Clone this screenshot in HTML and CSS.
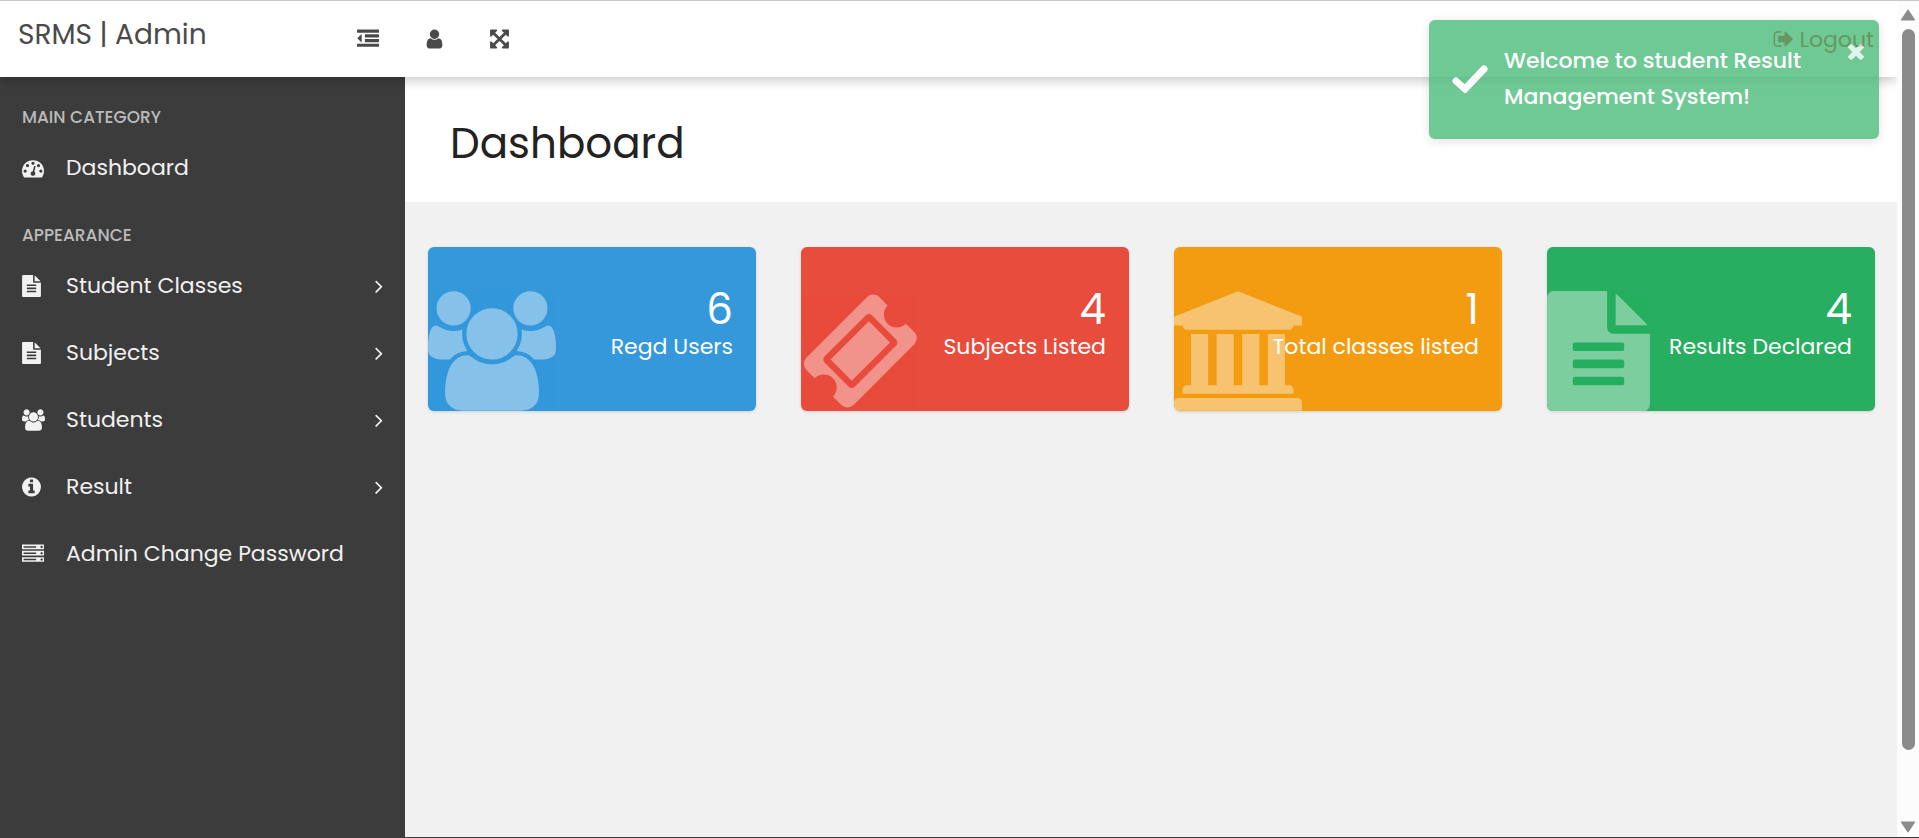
FILE: index.html
```html
<!DOCTYPE html>
<html lang="en">
<head>
<meta charset="utf-8">
<title>SRMS | Admin</title>
<link rel="stylesheet" href="styles.css">
</head>
<body>
<svg class="sprite" aria-hidden="true">
  <symbol id="users" viewBox="0 0 1920 1792"><path d="M593 896q-162 5-265 128H194q-82 0-138-40.500T0 865q0-353 124-353 6 0 43.500 21t97.500 42.500T384 597q67 0 133-23-5 37-5 66 0 139 81 256zm1071 637q0 120-73 189.500t-194 69.500H523q-121 0-194-69.500T256 1533q0-53 3.500-103.500t14-109T300 1212t43-97.500 62-81 85.500-53.500T602 960q10 0 43 21.500t73 48 107 48 135 21.500 135-21.500 107-48 73-48 43-21.500q61 0 111.500 20t85.500 53.500 62 81 43 97.500 26.500 108.500 14 109 3.500 103.500zM640 256q0 106-75 181t-181 75-181-75-75-181 75-181T384 0t181 75 75 181zm704 384q0 159-112.500 271.500T960 1024 688.500 911.500 576 640t112.500-271.500T960 256t271.500 112.500T1344 640zm576 225q0 78-56 118.500t-138 40.500h-134q-103-123-265-128 81-117 81-256 0-29-5-66 66 23 133 23 59 0 119-21.500t97.500-42.500 43.500-21q124 0 124 353zm-128-609q0 106-75 181t-181 75-181-75-75-181 75-181 181-75 181 75 75 181z"/></symbol>
  <symbol id="file" viewBox="128 0 1536 1792"><path d="M1596 476q14 14 28 36h-472v-472q22 14 36 28zm-476 164h544v1056q0 40-28 68t-68 28h-1344q-40 0-68-28t-28-68v-1600q0-40 28-68t68-28h800v544q0 40 28 68t68 28zm160 736v-64q0-14-9-23t-23-9h-704q-14 0-23 9t-9 23v64q0 14 9 23t23 9h704q14 0 23-9t9-23zm0-256v-64q0-14-9-23t-23-9h-704q-14 0-23 9t-9 23v64q0 14 9 23t23 9h704q14 0 23-9t9-23zm0-256v-64q0-14-9-23t-23-9h-704q-14 0-23 9t-9 23v64q0 14 9 23t23 9h704q14 0 23-9t9-23z"/></symbol>
  <symbol id="ticket" viewBox="12 0 1744 1792"><path d="M1024 452l316 316-572 572-316-316zm-211 979l618-618q19-19 19-45t-19-45l-362-362q-18-18-45-18t-45 18l-618 618q-19 19-19 45t19 45l362 362q18 18 45 18t45-18zm889-637l-907 908q-37 37-90.500 37t-90.500-37l-126-126q56-56 56-136t-56-136-136-56-136 56l-125-126q-37-37-37-90.500t37-90.500l907-906q37-37 90.500-37t90.500 37l125 125q-56 56-56 136t56 136 136 56 136-56l126 125q37 37 37 90.500t-37 90.500z"/></symbol>
  <symbol id="university" viewBox="0 0 1920 1792"><path d="M960 0l960 384v128h-128q0 26-20.500 45t-48.500 19h-1526q-28 0-48.500-19t-20.500-45h-128v-128zm-704 640h256v768h128v-768h256v768h128v-768h256v768h128v-768h256v768h59q28 0 48.500 19t20.500 45v64h-1664v-64q0-26 20.500-45t48.500-19h59v-768zm1595 960q28 0 48.500 19t20.500 45v128h-1920v-128q0-26 20.500-45t48.500-19h1782z"/></symbol>
  <symbol id="gauge" viewBox="0 0 1792 1792"><path d="M384 1152q0-53-37.500-90.500t-90.500-37.500-90.500 37.500-37.500 90.500 37.500 90.500 90.500 37.500 90.500-37.500 37.500-90.500zm192-448q0-53-37.500-90.500t-90.500-37.500-90.500 37.500-37.500 90.500 37.500 90.500 90.500 37.500 90.500-37.500 37.500-90.500zm428 481l101-382q6-26-7.500-48.500t-38.500-29.500-48 6.500-30 39.500l-101 382q-60 5-107 43.500t-63 98.500q-20 77 20 146t117 89 146-20 89-117q16-60-6-117t-72-91zm660-33q0-53-37.500-90.500t-90.500-37.500-90.500 37.500-37.500 90.500 37.500 90.500 90.500 37.500 90.500-37.500 37.500-90.500zm-640-640q0-53-37.500-90.500t-90.500-37.500-90.500 37.500-37.500 90.500 37.500 90.500 90.500 37.500 90.500-37.500 37.500-90.500zm448 192q0-53-37.500-90.500t-90.500-37.500-90.500 37.500-37.500 90.500 37.500 90.500 90.500 37.500 90.500-37.500 37.500-90.500zm320 448q0 261-141 483-19 29-54 29h-1402q-35 0-54-29-141-221-141-483 0-182 71-348t191-286 286-191 348-71 348 71 286 191 191 286 71 348z"/></symbol>
  <symbol id="info" viewBox="128 0 1536 1792"><path d="M1152 1376v-160q0-14-9-23t-23-9h-96v-512q0-14-9-23t-23-9h-320q-14 0-23 9t-9 23v160q0 14 9 23t23 9h96v320h-96q-14 0-23 9t-9 23v160q0 14 9 23t23 9h448q14 0 23-9t9-23zm-128-896v-160q0-14-9-23t-23-9h-192q-14 0-23 9t-9 23v160q0 14 9 23t23 9h192q14 0 23-9t9-23zm640 416q0 209-103 385.500t-279.500 279.500-385.500 103-385.500-103-279.500-279.500-103-385.500 103-385.500 279.500-279.500 385.500-103 385.500 103 279.500 279.500 103 385.500z"/></symbol>
  <symbol id="server" viewBox="0 0 1792 1792"><path d="M128 1408h1024v-128h-1024v128zm0-512h1024v-128h-1024v128zm1568 448q0-40-28-68t-68-28-68 28-28 68 28 68 68 28 68-28 28-68zm-1568-960h1024v-128h-1024v128zm1568 448q0-40-28-68t-68-28-68 28-28 68 28 68 68 28 68-28 28-68zm0-512q0-40-28-68t-68-28-68 28-28 68 28 68 68 28 68-28 28-68zm96 832v384h-1792v-384h1792zm0-512v384h-1792v-384h1792zm0-512v384h-1792v-384h1792z"/></symbol>
  <symbol id="logout" viewBox="0 0 1664 1792"><path d="M704 1440q0 4 1 20t.5 26.500-3 23.500-10 19.500-20.500 6.500h-320q-119 0-203.500-84.500t-84.500-203.500v-704q0-119 84.500-203.500t203.500-84.500h320q13 0 22.500 9.500t9.500 22.500q0 4 1 20t.5 26.500-3 23.500-10 19.500-20.500 6.500h-320q-66 0-113 47t-47 113v704q0 66 47 113t113 47h312l11.500 1 11.500 3 8 5.500 7 9 2 13.500zm928-544q0 26-19 45l-544 544q-19 19-45 19t-45-19-19-45v-288h-448q-26 0-45-19t-19-45v-384q0-26 19-45t45-19h448v-288q0-26 19-45t45-19 45 19l544 544q19 19 19 45z"/></symbol>
  <symbol id="user" viewBox="256 0 1280 1792"><path d="M1536 1399q0 109-62.500 187t-150.500 78h-854q-88 0-150.500-78t-62.500-187q0-85 8.500-160.500t31.500-152 58.500-131 94-89 134.500-34.500q131 128 313 128t313-128q76 0 134.500 34.500t94 89 58.500 131 31.500 152 8.500 160.500zm-256-887q0 159-112.500 271.500t-271.500 112.500-271.500-112.500-112.500-271.500 112.500-271.500 271.500-112.500 271.500 112.500 112.500 271.500z"/></symbol>
  <symbol id="dedent" viewBox="0 0 1792 1792"><path d="M384 544v576q0 13-9.500 22.500t-22.500 9.500q-14 0-23-9l-288-288q-9-9-9-23t9-23l288-288q9-9 23-9 13 0 22.500 9.500t9.500 22.500zm1408 768v192q0 13-9.500 22.500t-22.500 9.500h-1728q-13 0-22.500-9.500t-9.500-22.500v-192q0-13 9.500-22.500t22.500-9.500h1728q13 0 22.500 9.500t9.500 22.500zm0-384v192q0 13-9.500 22.500t-22.500 9.500h-1088q-13 0-22.500-9.500t-9.500-22.500v-192q0-13 9.500-22.500t22.500-9.500h1088q13 0 22.500 9.500t9.500 22.500zm0-384v192q0 13-9.500 22.500t-22.500 9.500h-1088q-13 0-22.500-9.500t-9.500-22.500v-192q0-13 9.500-22.500t22.500-9.500h1088q13 0 22.500 9.500t9.500 22.500zm0-384v192q0 13-9.500 22.500t-22.500 9.500h-1728q-13 0-22.500-9.500t-9.500-22.500v-192q0-13 9.500-22.500t22.500-9.500h1728q13 0 22.500 9.500t9.500 22.500z"/></symbol>
  <symbol id="expand" viewBox="128 0 1536 1792"><path d="M1411 541l-355 355 355 355 144-144q29-31 70-14 39 17 39 59v448q0 26-19 45t-45 19h-448q-42 0-59-40-17-39 14-69l144-144-355-355-355 355 144 144q31 30 14 69-17 40-59 40h-448q-26 0-45-19t-19-45v-448q0-42 40-59 39-17 69 14l144 144 355-355-355-355-144 144q-19 19-45 19-12 0-24-5-40-17-40-59v-448q0-26 19-45t45-19h448q42 0 59 40 17 39-14 69l-144 144 355 355 355-355-144-144q-31-30-14-69 17-40 59-40h448q26 0 45 19t19 45v448q0 42-39 59-13 5-25 5-26 0-45-19z"/></symbol>
  <symbol id="angle" viewBox="576 0 640 1792"><path d="M1171 960q0 13-10 23l-466 466q-10 10-23 10t-23-10l-50-50q-10-10-10-23t10-23l393-393-393-393q-10-10-10-23t10-23l50-50q10-10 23-10t23 10l466 466q10 10 10 23z"/></symbol>
  <symbol id="times" viewBox="302 366 1188 1188"><path d="M1490 1322q0 40-28 68l-136 136q-28 28-68 28t-68-28l-294-294-294 294q-28 28-68 28t-68-28l-136-136q-28-28-28-68t28-68l294-294-294-294q-28-28-28-68t28-68l136-136q28-28 68-28t68 28l294 294 294-294q28-28 68-28t68 28l136 136q28 28 28 68t-28 68l-294 294 294 294q28 28 28 68z"/></symbol>
  <symbol id="check" viewBox="0 0 36 28"><path d="M4 16l9 8L32 4" fill="none" stroke="currentColor" stroke-width="7" stroke-linecap="round" stroke-linejoin="miter"/></symbol>
</svg>

<div class="window">
  <div class="app">
    <header class="topbar">
      <a class="brand" href="#">SRMS | Admin</a>
      <div class="tools">
        <button class="tool" type="button" aria-label="Toggle sidebar"><svg class="icon w22"><use href="#dedent"/></svg></button>
        <button class="tool" type="button" aria-label="Profile"><svg class="icon w17"><use href="#user"/></svg></button>
        <button class="tool" type="button" aria-label="Full screen"><svg class="icon w19"><use href="#expand"/></svg></button>
      </div>
      <a class="logout" href="#"><svg class="icon w22"><use href="#logout"/></svg>Logout</a>
    </header>
    <div class="body">
      <nav class="sidebar">
        <h2 class="group">Main Category</h2>
        <a class="item" href="#"><span class="mark"><svg class="icon w22"><use href="#gauge"/></svg></span>Dashboard</a>
        <h2 class="group">Appearance</h2>
        <a class="item" href="#"><span class="mark"><svg class="icon w19"><use href="#file"/></svg></span>Student Classes<svg class="arrow"><use href="#angle"/></svg></a>
        <a class="item" href="#"><span class="mark"><svg class="icon w19"><use href="#file"/></svg></span>Subjects<svg class="arrow"><use href="#angle"/></svg></a>
        <a class="item" href="#"><span class="mark"><svg class="icon w23"><use href="#users"/></svg></span>Students<svg class="arrow"><use href="#angle"/></svg></a>
        <a class="item" href="#"><span class="mark"><svg class="icon w19"><use href="#info"/></svg></span>Result<svg class="arrow"><use href="#angle"/></svg></a>
        <a class="item" href="#"><span class="mark"><svg class="icon w22"><use href="#server"/></svg></span>Admin Change Password</a>
      </nav>
      <main class="main">
        <div class="heading"><h1 class="title">Dashboard</h1></div>
        <section class="cards">
          <a class="card blue" href="#"><svg class="art wide"><use href="#users"/></svg><span class="number">6</span><span class="name">Regd Users</span></a>
          <a class="card red" href="#"><svg class="art mid"><use href="#ticket"/></svg><span class="number">4</span><span class="name">Subjects Listed</span></a>
          <a class="card orange" href="#"><svg class="art wide"><use href="#university"/></svg><span class="number">1</span><span class="name">Total classes listed</span></a>
          <a class="card green" href="#"><svg class="art slim"><use href="#file"/></svg><span class="number">4</span><span class="name">Results Declared</span></a>
        </section>
      </main>
    </div>
    <div class="toast" role="status">
      <svg class="check"><use href="#check"/></svg>
      <p class="message">Welcome to student Result Management System!</p>
      <button class="close" type="button" aria-label="Close"><svg class="cross"><use href="#times"/></svg></button>
    </div>
  </div>
  <div class="scrollbar" aria-hidden="true">
    <svg class="tip" viewBox="0 0 14 11"><path d="M7 1l6 9H1z" stroke="currentColor" stroke-linejoin="round"/></svg>
    <div class="track"><div class="thumb"></div></div>
    <svg class="tip" viewBox="0 0 14 11"><path d="M7 10l6-9H1z" stroke="currentColor" stroke-linejoin="round"/></svg>
  </div>
</div>
</body>
</html>
```

FILE: styles.css
```css
* { box-sizing: border-box; }
body {
  margin: 0;
  font-family: Poppins, Inter, "Open Sans", sans-serif;
  font-size: 22px;
  color: #222;
  background: #f1f1f1;
}
a { color: inherit; text-decoration: none; }
button { padding: 0; border: 0; background: none; color: inherit; font: inherit; cursor: pointer; }
h1, h2, p { margin: 0; font-weight: 400; }
svg { display: block; fill: currentColor; }
.sprite { position: absolute; width: 0; height: 0; }

.window {
  display: flex;
  height: 100vh;
  border-top: 1px solid #c8c8c8;
  border-bottom: 1px solid #3c3c3c;
}
.app {
  position: relative;
  display: flex;
  flex: 1;
  flex-direction: column;
  min-width: 0;
  overflow: hidden;
}

.icon { height: 22px; }
.w17 { width: 17px; }
.w19 { width: 19px; }
.w22 { width: 22px; }
.w23 { width: 23px; }

.topbar {
  position: relative;
  z-index: 1;
  display: flex;
  align-items: center;
  height: 76px;
  padding: 0 23px 0 18px;
  background: #fff;
  color: #4a4a4a;
  box-shadow: 0 4px 10px rgba(0, 0, 0, 0.2);
}
.brand { width: 339px; padding-bottom: 8px; font-size: 28px; }
.tools { display: flex; gap: 47px; }
.logout { display: flex; align-items: center; gap: 5px; margin-left: auto; color: #d00000; }

.body { display: flex; flex: 1; min-height: 0; }
.sidebar { width: 405px; padding-top: 6px; background: #3c3c3c; color: #f1f1f1; }
.group {
  padding: 21px 22px 3px;
  color: #bbb;
  font-size: 17px;
  font-weight: 500;
  line-height: 27px;
  text-transform: uppercase;
}
.item { display: flex; align-items: center; height: 67px; padding: 0 22px; }
.mark { width: 44px; }
.arrow { width: 8px; height: 22px; margin-left: auto; }

.main { flex: 1; min-width: 0; background: #f1f1f1; }
.heading { padding: 36px 45px 28px; background: #fff; }
.title { font-size: 42px; line-height: 61px; }

.cards { display: grid; grid-template-columns: repeat(4, 1fr); gap: 45px; padding: 45px 22px 45px 23px; }
.card {
  position: relative;
  display: flex;
  flex-direction: column;
  align-items: flex-end;
  height: 164px;
  padding: 40px 23px;
  overflow: hidden;
  border-radius: 6px;
  color: #fff;
  box-shadow: 0 1px 3px rgba(0, 0, 0, 0.14);
}
.blue { background: #3498db; }
.red { background: #e84c3d; }
.orange { background: #f39c12; }
.green { background: #27ae60; }
.art { position: absolute; bottom: 0; left: 0; height: 120px; opacity: 0.4; }
.wide { width: 128px; }
.mid { width: 117px; }
.slim { width: 103px; }
.number { position: relative; font-size: 42px; line-height: 46px; }
.name { position: relative; line-height: 28px; }

.toast {
  position: absolute;
  z-index: 2;
  top: 19px;
  right: 18px;
  display: flex;
  align-items: flex-start;
  width: 450px;
  padding: 23px 15px 24px 23px;
  border-radius: 6px;
  background: #4cbc7a;
  color: #fff;
  box-shadow: 0 2px 10px rgba(0, 0, 0, 0.15);
  opacity: 0.8;
}
.check { width: 36px; height: 28px; margin-top: 22px; }
.message { flex: 1; padding-left: 16px; font-weight: 500; line-height: 36px; }
.close { padding-top: 1px; opacity: 0.8; }
.cross { width: 16px; height: 16px; }

.scrollbar {
  display: flex;
  flex-direction: column;
  align-items: center;
  width: 22px;
  padding: 8px 0 4px;
  background: #fcfcfc;
  color: #8b8b8b;
}
.tip { width: 16px; height: 12px; }
.track { flex: 1; padding: 8px 0; }
.thumb { width: 13px; height: 92%; border-radius: 7px; background: #8b8b8b; }
```
